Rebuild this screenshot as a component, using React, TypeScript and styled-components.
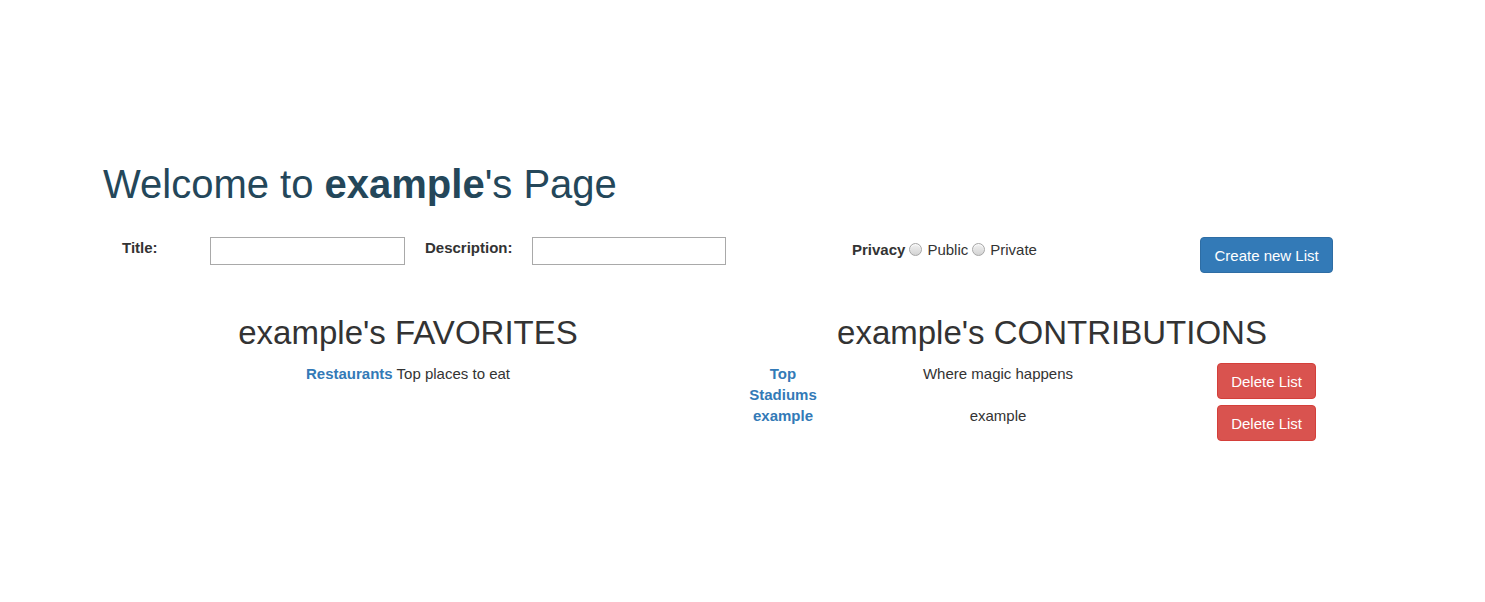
import React from "react";
import styled, { createGlobalStyle } from "styled-components";

const GlobalStyle = createGlobalStyle`
  html, body {
    margin: 0;
    padding: 0;
    background: #ffffff;
  }
  body {
    font-family: "Liberation Sans", Arial, sans-serif;
    font-size: 15px;
    line-height: 21px;
    color: #333333;
  }
  * { box-sizing: border-box; }
`;

const Page = styled.div`
  padding-top: 162px;
  padding-bottom: 40px;
`;

const Welcome = styled.h1`
  margin: 0 0 0 103px;
  font-size: 40px;
  line-height: 44px;
  font-weight: 400;
  color: #24475a;
`;

const Strong = styled.strong`
  font-weight: 700;
`;

const FormRow = styled.form`
  display: flex;
  align-items: flex-start;
  margin-top: 31px;
  padding-left: 122px;
`;

const FieldLabel = styled.label<{ $width: number; $offset?: number }>`
  width: ${(p) => p.$width}px;
  margin-left: ${(p) => p.$offset ?? 0}px;
  font-weight: 700;
  line-height: 21px;
`;

const TextInput = styled.input<{ $width: number }>`
  width: ${(p) => p.$width}px;
  height: 28px;
  border: 1px solid #a9a9a9;
  padding: 2px 4px;
  font: inherit;
  background: #fff;
`;

const PrivacyGroup = styled.div`
  display: flex;
  align-items: center;
  width: 348px;
  margin-left: 126px;
  margin-top: 2px;
  line-height: 21px;
`;

const PrivacyLabel = styled.span`
  font-weight: 700;
`;

const Radio = styled.input`
  appearance: none;
  -webkit-appearance: none;
  width: 13px;
  height: 13px;
  margin: 0 5px 0 4px;
  border-radius: 50%;
  border: 1px solid #a6a6a6;
  background: linear-gradient(#f2f2f2, #d3d3d3);
  box-shadow: inset 0 1px 1px rgba(255, 255, 255, 0.8);
`;

const Button = styled.button<{ $variant: "primary" | "danger" }>`
  display: inline-block;
  height: 36px;
  padding: 0 ${(p) => (p.$variant === "primary" ? "13.5px" : "13px")};
  font-family: inherit;
  font-size: 15px;
  line-height: 21px;
  color: #ffffff;
  border-radius: 4px;
  cursor: pointer;
  white-space: nowrap;
  background: ${(p) => (p.$variant === "primary" ? "#337ab7" : "#d9534f")};
  border: 1px solid ${(p) => (p.$variant === "primary" ? "#2e6da4" : "#d43f3a")};
`;

const Sections = styled.div`
  display: grid;
  grid-template-columns: 644px 644px;
  margin-top: 42px;
  padding-left: 86px;
`;

const Section = styled.section`
  display: flex;
  flex-direction: column;
`;

const SectionTitle = styled.h2`
  margin: 0 0 12px 0;
  font-size: 33px;
  line-height: 36px;
  font-weight: 400;
  text-align: center;
  color: #333333;
`;

const FavRow = styled.div`
  text-align: center;
`;

const ListLink = styled.a`
  color: #337ab7;
  font-weight: 700;
  text-decoration: none;
`;

const ContribTable = styled.div`
  display: grid;
  grid-template-columns: 68px 362px 137px;
  margin-left: 19px;
`;

const Cell = styled.div<{ $align?: "center" | "end" }>`
  text-align: center;
  justify-self: ${(p) => (p.$align === "end" ? "end" : "stretch")};
`;

const contributions = [
  { name: "Top Stadiums", description: "Where magic happens" },
  { name: "example", description: "example" },
];

export default function App() {
  return (
    <>
      <GlobalStyle />
      <Page>
        <Welcome>
          Welcome to <Strong>example</Strong>'s Page
        </Welcome>

        <FormRow onSubmit={(e) => e.preventDefault()}>
          <FieldLabel $width={88}>Title:</FieldLabel>
          <TextInput $width={195} type="text" />
          <FieldLabel $width={107} $offset={20}>
            Description:
          </FieldLabel>
          <TextInput $width={194} type="text" />
          <PrivacyGroup>
            <PrivacyLabel>Privacy</PrivacyLabel>
            <Radio type="radio" name="privacy" value="public" />
            Public
            <Radio type="radio" name="privacy" value="private" />
            Private
          </PrivacyGroup>
          <Button $variant="primary" type="submit">
            Create new List
          </Button>
        </FormRow>

        <Sections>
          <Section>
            <SectionTitle>example's FAVORITES</SectionTitle>
            <FavRow>
              <ListLink href="#">Restaurants</ListLink> Top places to eat
            </FavRow>
          </Section>
          <Section>
            <SectionTitle>example's CONTRIBUTIONS</SectionTitle>
            <ContribTable>
              {contributions.map((c) => (
                <React.Fragment key={c.name}>
                  <Cell>
                    <ListLink href="#">{c.name}</ListLink>
                  </Cell>
                  <Cell>{c.description}</Cell>
                  <Cell $align="end">
                    <Button $variant="danger" type="button">
                      Delete List
                    </Button>
                  </Cell>
                </React.Fragment>
              ))}
            </ContribTable>
          </Section>
        </Sections>
      </Page>
    </>
  );
}
